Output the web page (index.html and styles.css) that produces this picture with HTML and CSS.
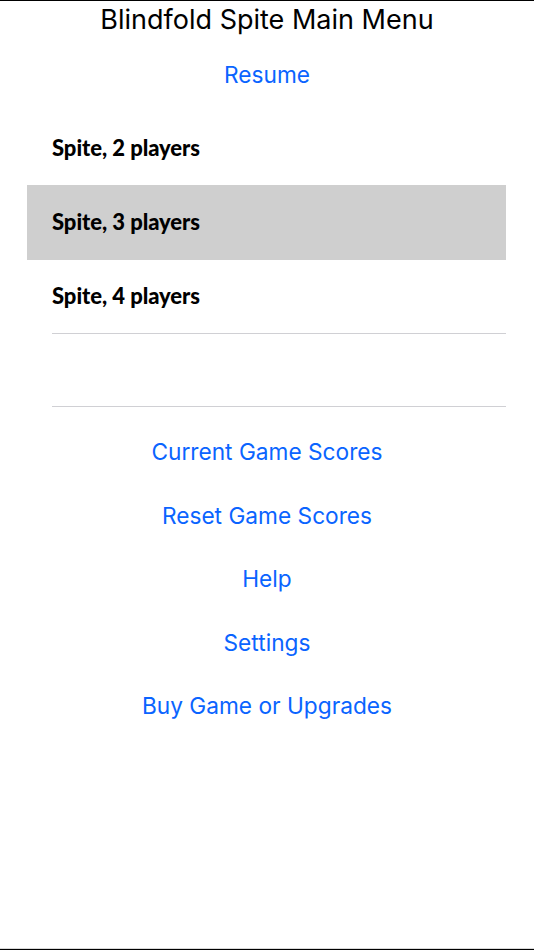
FILE: index.html
```html
<!DOCTYPE html>
<html lang="en">
<head>
<meta charset="utf-8">
<title>Blindfold Spite Main Menu</title>
<link rel="stylesheet" href="styles.css">
</head>
<body>
<main class="screen">
  <h1 class="title">Blindfold Spite Main Menu</h1>
  <a class="link resume">Resume</a>
  <ul class="table">
    <li class="row first"><span class="row-label">Spite, 2 players</span></li>
    <li class="row selected"><span class="row-label">Spite, 3 players</span></li>
    <li class="row third"><span class="row-label">Spite, 4 players</span></li>
    <li class="row empty"></li>
  </ul>
  <nav class="links">
    <a class="link">Current Game Scores</a>
    <a class="link">Reset Game Scores</a>
    <a class="link">Help</a>
    <a class="link">Settings</a>
    <a class="link">Buy Game or Upgrades</a>
  </nav>
</main>
</body>
</html>
```
FILE: styles.css
```css
* { box-sizing: border-box; }
html, body { margin: 0; padding: 0; background: #fff; }
.screen {
  width: 534px;
  height: 950px;
  display: flex;
  flex-direction: column;
  border-top: 1px solid #000;
  border-bottom: 1px solid #000;
  box-shadow: inset 0 -1px 0 #d8d8d8;
  font-family: Inter, "Liberation Sans", sans-serif;
  overflow: hidden;
}
.title {
  margin: 0;
  height: 38px;
  line-height: 37px;
  text-align: center;
  font-size: 27px;
  font-weight: 400;
  color: #000;
}
.link {
  display: block;
  text-align: center;
  font-size: 22.7px;
  line-height: 63.5px;
  height: 63.5px;
  color: #0a64ff;
}
.resume { height: 72px; line-height: 71px; }
.table {
  list-style: none;
  margin: 0;
  padding: 0 28px 0 27px;
}
.row {
  padding-left: 25px;
  padding-bottom: 2px;
  display: flex;
  align-items: center;
}
.row-label {
  color: #000;
  font-family: Lato, sans-serif;
  font-weight: 900;
  font-size: 22px;
  letter-spacing: -0.05px;
}
.first { height: 74px; }
.selected { background: #cfcfcf; height: 75px; }
.third { height: 74px; padding-bottom: 4px; }
.empty { height: 73px; }
.third, .empty {
  background-image: linear-gradient(#d0d0d4, #d0d0d4);
  background-size: calc(100% - 25px) 1px;
  background-position: 25px 100%;
  background-repeat: no-repeat;
}
.links { padding-top: 13px; }
```
